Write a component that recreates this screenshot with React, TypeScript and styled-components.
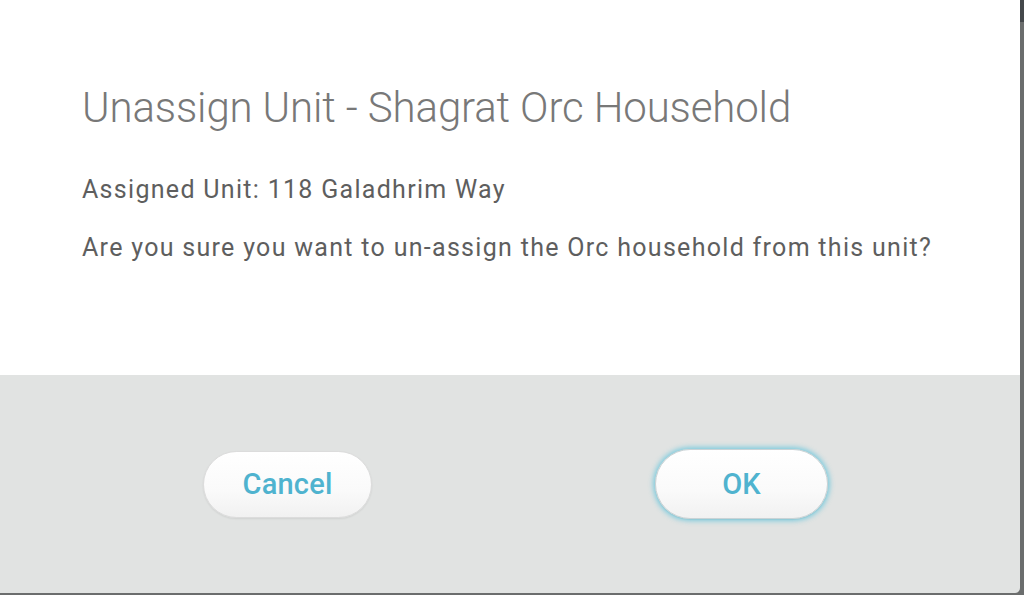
import React from "react";
import styled, { createGlobalStyle } from "styled-components";

const Global = createGlobalStyle`
  html, body { margin: 0; padding: 0; }
  body {
    width: 1024px;
    height: 595px;
    overflow: hidden;
    background: linear-gradient(#44484b 0 22px, #6b6d6d 22px);
    font-family: Roboto, "Liberation Sans", sans-serif;
  }
`;

const Dialog = styled.div`
  width: 1020px;
  height: 593px;
  display: flex;
  flex-direction: column;
  border-radius: 0 0 5px 0;
  overflow: hidden;
`;

const Content = styled.div`
  height: 375px;
  box-sizing: border-box;
  background: #ffffff;
  padding: 83px 0 0 82px;
`;

const Title = styled.h1`
  margin: 0 0 42px;
  font-family: Roboto, "Liberation Sans", sans-serif;
  font-weight: 300;
  font-size: 42px;
  line-height: 50px;
  color: #787878;
  letter-spacing: -0.14px;
`;

const Text = styled.p`
  margin: 0 0 28px;
  font-family: Roboto, "Liberation Sans", sans-serif;
  font-weight: 400;
  font-size: 25px;
  line-height: 30px;
  color: #5e5e5e;
  letter-spacing: 1.3px;
`;

const Footer = styled.div`
  flex: 1;
  background: #e1e3e2;
  display: flex;
  align-items: center;
  justify-content: center;
  gap: 283px;
  padding-left: 11px;
`;

const Button = styled.button<{ $primary?: boolean; $w: number }>`
  width: ${(p) => p.$w}px;
  height: ${(p) => (p.$primary ? 70 : 67)}px;
  border-radius: 36px;
  border: 1px solid ${(p) => (p.$primary ? "#c9d3d6" : "#dcdcdc")};
  background: linear-gradient(#ffffff 0%, #fafafa 60%, #f1f1f1 100%);
  box-shadow: ${(p) =>
    p.$primary
      ? "0 0 5px 2px rgba(95, 196, 220, 0.75), 0 1px 1px rgba(0,0,0,0.08)"
      : "0 1px 2px rgba(0, 0, 0, 0.08)"};
  font-family: Roboto, "Liberation Sans", sans-serif;
  font-weight: 500;
  font-size: 29px;
  color: #4fb3cf;
  letter-spacing: 0.2px;
  cursor: pointer;
`;

export default function App() {
  return (
    <>
      <Global />
      <Dialog>
        <Content>
          <Title>Unassign Unit - Shagrat Orc Household</Title>
          <Text>Assigned Unit: 118 Galadhrim Way</Text>
          <Text>Are you sure you want to un-assign the Orc household from this unit?</Text>
        </Content>
        <Footer>
          <Button $w={169}>Cancel</Button>
          <Button $w={173} $primary>
            OK
          </Button>
        </Footer>
      </Dialog>
    </>
  );
}
